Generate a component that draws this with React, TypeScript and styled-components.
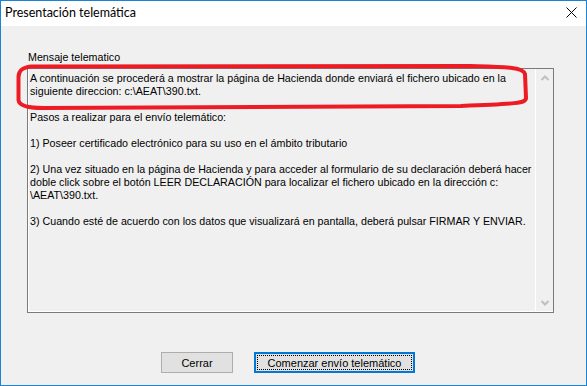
import styled, { createGlobalStyle } from 'styled-components';

const GlobalStyle = createGlobalStyle`
  html, body {
    margin: 0;
    padding: 0;
    background: #f0f0f0;
  }
`;

const Window = styled.div`
  position: relative;
  box-sizing: border-box;
  width: 587px;
  height: 386px;
  border: 1px solid #1883d7;
  background: #f0f0f0;
  display: flex;
  flex-direction: column;
  font-family: 'Liberation Sans', Arial, sans-serif;
  font-size: 10.7px;
  color: #000;
`;

const TitleBar = styled.div`
  height: 25px;
  background: #fff;
  display: flex;
  align-items: center;
  justify-content: space-between;
  padding: 0 9px 0 4px;
`;

const Title = styled.span`
  font-family: Lato, 'Noto Sans', sans-serif;
  font-size: 12.5px;
  line-height: 16px;
  margin-top: -1px;
`;

const CloseIcon = styled.svg`
  width: 11px;
  height: 11px;
  margin-top: -3px;
`;

const Body = styled.div`
  flex: 1;
  display: flex;
  flex-direction: column;
  padding: 25px 0 0 26px;
`;

const Label = styled.div`
  height: 13px;
  line-height: 13px;
  margin: 0 0 4px 1px;
`;

const TextBox = styled.div`
  box-sizing: border-box;
  width: 527px;
  height: 245px;
  border: 1px solid #7a7a7a;
  box-shadow: inset 1px -1px 0 #fff;
  display: flex;
`;

const Content = styled.div`
  flex: 1;
  padding: 3px 0 0 2px;
  white-space: pre;
  line-height: 13px;
`;

const Line = styled.div`
  height: 13px;
`;

const ScrollBar = styled.div`
  width: 17px;
  border-left: 1px solid #fff;
  display: flex;
  flex-direction: column;
  justify-content: space-between;
  padding-bottom: 1px;
`;

const Arrow = styled.div`
  height: 17px;
  display: flex;
  align-items: center;
  justify-content: center;
`;

const Buttons = styled.div`
  display: flex;
  gap: 21px;
  margin: 39px 0 0 134px;
`;

const Button = styled.button<{ $focused?: boolean }>`
  box-sizing: border-box;
  height: 21px;
  padding: 0;
  font-family: 'Liberation Sans', Arial, sans-serif;
  font-size: 11px;
  color: #000;
  background: #e1e1e1;
  border: ${p => (p.$focused ? '2px solid #0078d7' : '1px solid #adadad')};
  position: relative;
  cursor: default;
`;

const FocusRing = styled.span`
  position: absolute;
  inset: 1px;
  border: 1px dotted #000;
  pointer-events: none;
`;

const Annotation = styled.svg`
  position: absolute;
  left: 0;
  top: 0;
  pointer-events: none;
`;

const lines = [
  'A continuación se procederá a mostrar la página de Hacienda donde enviará el fichero ubicado en la',
  'siguiente direccion: c:\\AEAT\\390.txt.',
  '',
  'Pasos a realizar para el envío telemático:',
  '',
  '1) Poseer certificado electrónico para su uso en el ámbito tributario',
  '',
  '2) Una vez situado en la página de Hacienda y para acceder al formulario de su declaración deberá hacer',
  'doble click sobre el botón LEER DECLARACIÓN para localizar el fichero ubicado en la dirección c:',
  '\\AEAT\\390.txt.',
  '',
  '3) Cuando esté de acuerdo con los datos que visualizará en pantalla, deberá pulsar FIRMAR Y ENVIAR.',
];

const Chevron = ({ up }: { up?: boolean }) => (
  <svg width="8" height="6" viewBox="0 0 8 6">
    <path
      d={up ? 'M0.5 5 L4 1.5 L7.5 5' : 'M0.5 1 L4 4.5 L7.5 1'}
      fill="none"
      stroke="#bfbfbf"
      strokeWidth="2"
    />
  </svg>
);

export default function App() {
  return (
    <>
      <GlobalStyle />
      <Window>
        <TitleBar>
          <Title>Presentación telemática</Title>
          <CloseIcon viewBox="0 0 11 11">
            <path d="M0.5 0.5 L10.5 10.5 M10.5 0.5 L0.5 10.5" stroke="#000" strokeWidth="1" />
          </CloseIcon>
        </TitleBar>
        <Body>
          <Label>Mensaje telematico</Label>
          <TextBox>
            <Content>
              {lines.map((l, i) => (
                <Line key={i}>{l}</Line>
              ))}
            </Content>
            <ScrollBar>
              <Arrow>
                <Chevron up />
              </Arrow>
              <Arrow>
                <Chevron />
              </Arrow>
            </ScrollBar>
          </TextBox>
          <Buttons>
            <Button style={{ width: 72 }}>Cerrar</Button>
            <Button $focused style={{ width: 161 }}>
              <FocusRing />
              Comenzar envío telemático
            </Button>
          </Buttons>
        </Body>
        <Annotation width="587" height="386">
          <path
            d="M30 65.5 L470 65 C505 66 522 66 524 73 L525 97 C525 102 516 103 460 105 L42 107 C26 107 18 104 17.5 99 L17.5 76 C17.5 69 22 66.5 30 65.5 Z"
            fill="none"
            stroke="#ed1c24"
            strokeWidth="4"
          />
        </Annotation>
      </Window>
    </>
  );
}
